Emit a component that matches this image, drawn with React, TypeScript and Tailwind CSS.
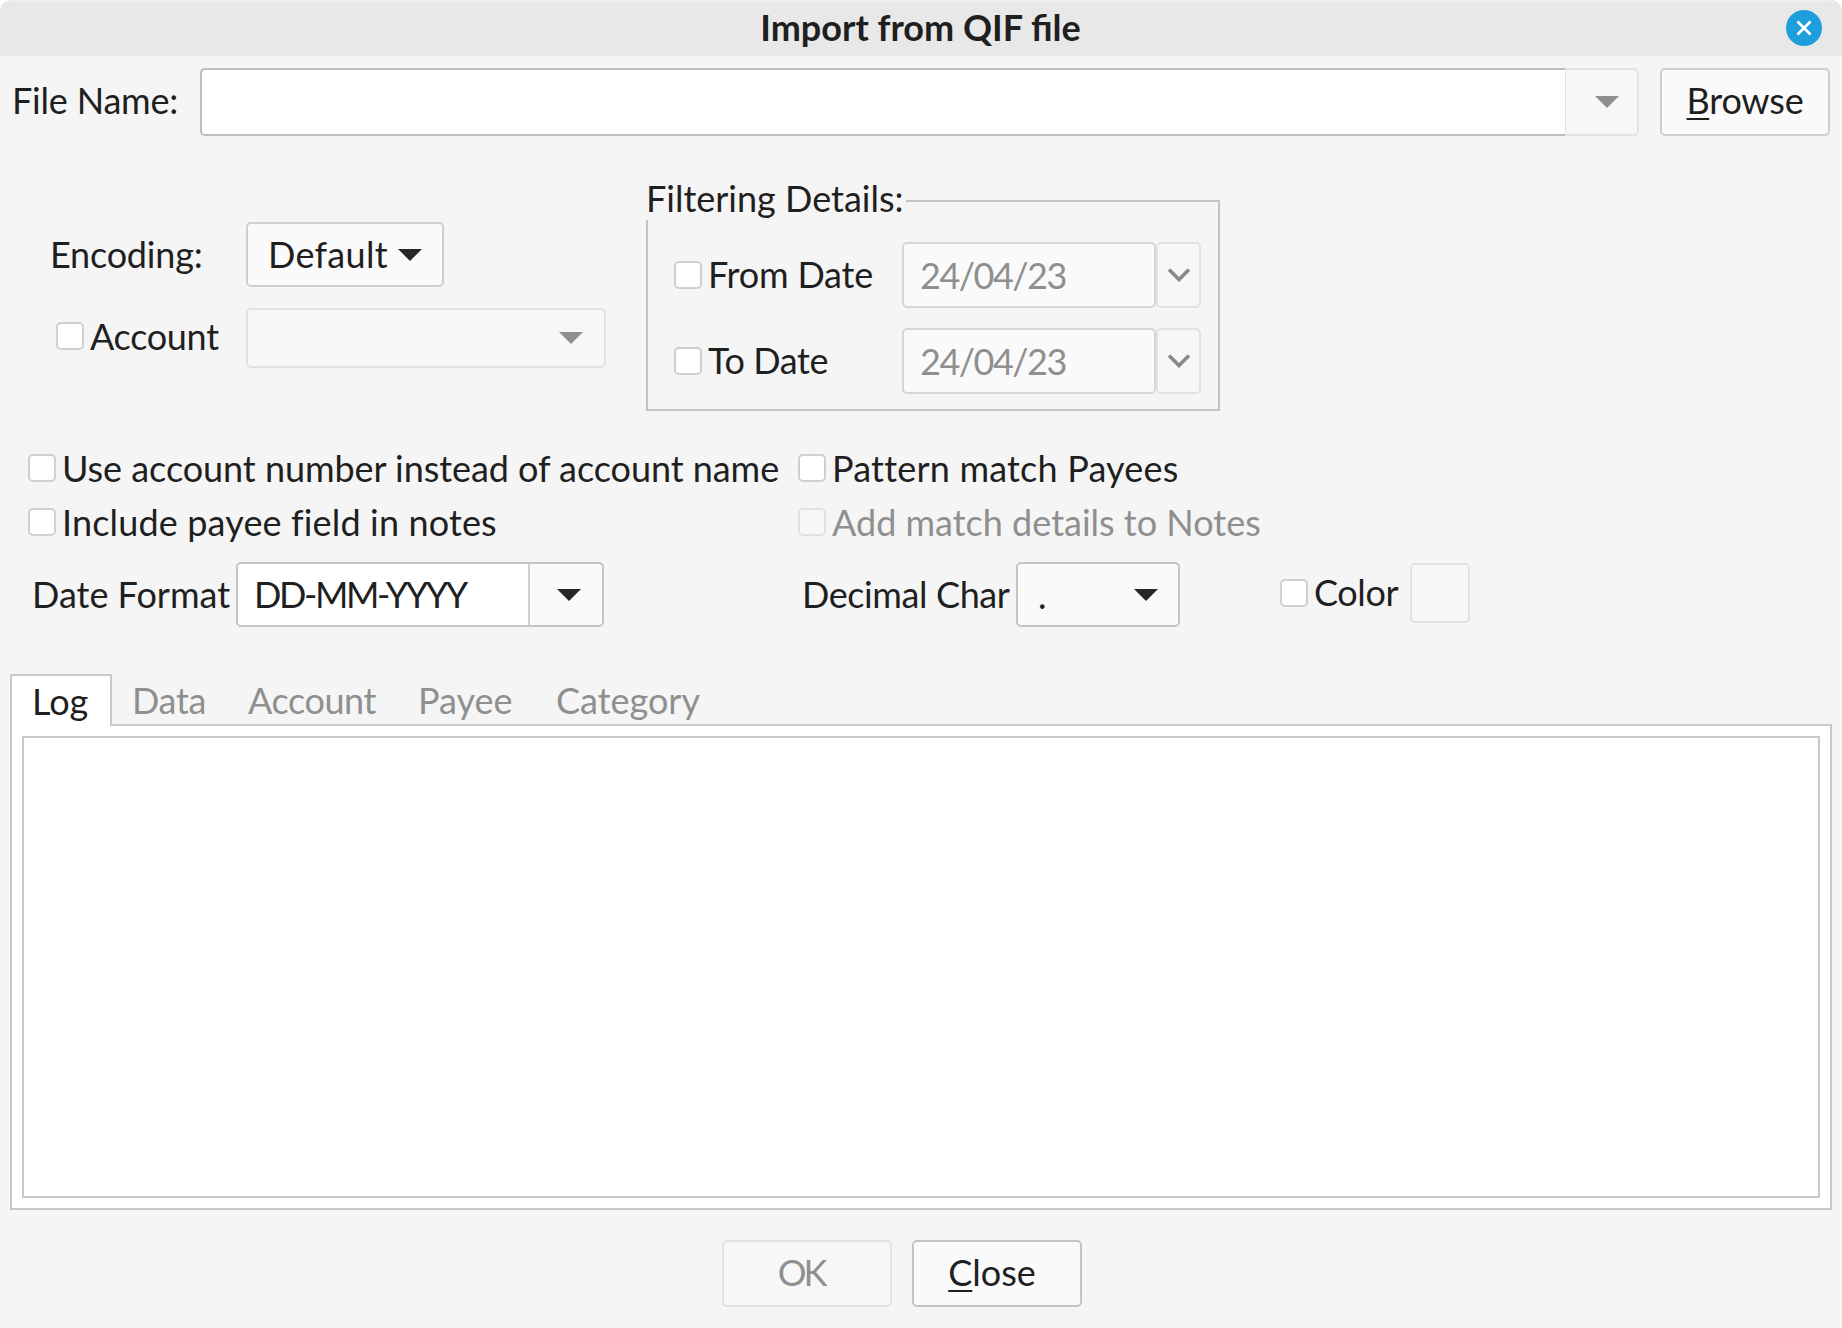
import type { ReactNode } from "react";

function Check({ disabled }: { disabled?: boolean }) {
  return (
    <span
      className={`block w-[28px] h-[28px] shrink-0 rounded-[5px] border-2 ${
        disabled ? "bg-[#f7f7f7] border-[#e2e2e2]" : "bg-white border-[#cfcfcf]"
      }`}
    />
  );
}

function Arrow({ dim }: { dim?: boolean }) {
  return (
    <svg width="24" height="12" viewBox="0 0 24 12" className="block">
      <polygon points="0,0 24,0 12,12" fill={dim ? "#8f8f8f" : "#262626"} />
    </svg>
  );
}

function Chevron() {
  return (
    <svg width="24" height="14" viewBox="0 0 24 14" className="block">
      <polyline points="2,1.5 12,11.5 22,1.5" fill="none" stroke="#8a8a8a" strokeWidth="3.6" />
    </svg>
  );
}

function DateRow({ label, last, tight }: { label: string; last?: boolean; tight?: boolean }) {
  return (
    <div className={`flex items-center ${last ? "mt-[20px]" : ""}`}>
      <div className="w-[254px] pl-[26px] flex items-center gap-[6px]">
        <Check />
        <span className={`whitespace-nowrap pb-[3px] ${tight ? "tracking-[-0.4px]" : "tracking-[-0.2px]"}`}>{label}</span>
      </div>
      <div className="w-[254px] h-[66px] rounded-[5px] border-2 border-[#d6d6d6] bg-[#fafafa] pl-[16px] flex items-center text-[#8f8f8f] tracking-[-1.5px]">
        24/04/23
      </div>
      <div className="w-[45px] h-[66px] rounded-[5px] border-2 border-[#e2e2e2] bg-[#f7f7f7] flex items-center justify-center">
        <Chevron />
      </div>
    </div>
  );
}

function CheckRow({ children, disabled, className }: { children: ReactNode; disabled?: boolean; className?: string }) {
  return (
    <div className={`flex items-center gap-[6px] h-[28px] whitespace-nowrap ${disabled ? "text-[#8f8f8f]" : ""}`}>
      <Check disabled={disabled} />
      <span className={className}>{children}</span>
    </div>
  );
}

export default function App() {
  return (
    <div className="relative w-[1842px] h-[1328px] bg-[#f5f5f5] text-[#1f1f1f] text-[36px] leading-none [font-family:Lato,sans-serif] flex flex-col overflow-hidden rounded-t-[12px]">
      <span className="absolute left-0 top-0 w-[13px] h-[13px] rounded-tl-[12px] border-t-2 border-l-2 border-[#b4b4b4]" />
      <span className="absolute right-0 top-0 w-[13px] h-[13px] rounded-tr-[12px] border-t-2 border-r-2 border-[#b4b4b4]" />

      <div className="relative h-[56px] shrink-0 bg-[#e8e8e8] border-t-2 border-[#eeeeee] flex items-center justify-center font-bold pb-[5px] pr-[1px]">
        Import from QIF file
        <button className="absolute right-[20px] top-[8px] w-[36px] h-[36px] rounded-full bg-[#1f9ede] flex items-center justify-center">
          <svg width="18" height="18" viewBox="0 0 18 18">
            <path d="M2.5 2.5 L15.5 15.5 M15.5 2.5 L2.5 15.5" stroke="white" strokeWidth="2.8" fill="none" />
          </svg>
        </button>
      </div>

      <div className="mt-[12px] pl-[12px] pr-[12px] flex items-center h-[68px]">
        <span className="w-[188px] pb-[4px] tracking-[-0.2px]">File Name:</span>
        <div className="w-[1365px] h-full bg-white border-2 border-r-0 border-[#bdbdbd] rounded-l-[5px]" />
        <div className="w-[74px] h-full bg-[#f7f7f7] border-2 border-l-[1px] border-[#e2e2e2] rounded-r-[5px] flex items-center justify-center pl-[10px]">
          <Arrow dim />
        </div>
        <div className="ml-[21px] w-[170px] h-full bg-[#fafafa] border-2 border-[#cfcfcf] rounded-[5px] flex items-center justify-center">
          <span className="pb-[4px] tracking-[-0.2px]"><span className="underline decoration-2 underline-offset-4">B</span>rowse</span>
        </div>
      </div>

      <div className="mt-[64px] flex h-[211px]">
        <div className="w-[646px] shrink-0 pt-[22px]">
          <div className="flex items-center">
            <span className="ml-[50px] w-[196px] pb-[2px] tracking-[-0.2px]">Encoding:</span>
            <div className="w-[198px] h-[65px] bg-[#fafafa] border-2 border-[#cfcfcf] rounded-[5px] flex items-center pl-[20px] gap-[10px]">
              <span className="pb-[2px] tracking-[0.3px]">Default</span>
              <Arrow />
            </div>
          </div>
          <div className="mt-[21px] flex items-center">
            <div className="ml-[56px] mb-[4px] w-[190px] flex items-center gap-[6px]">
              <Check />
              <span className="tracking-[-0.3px]">Account</span>
            </div>
            <div className="w-[360px] h-[60px] bg-[#f7f7f7] border-2 border-[#e2e2e2] rounded-[5px] flex items-center justify-end pr-[21px]">
              <Arrow dim />
            </div>
          </div>
        </div>
        <div className="relative w-[574px] h-[211px] border-2 border-[#c4c4c4] pt-[40px]">
          <span className="absolute left-[-2px] top-[-22px] bg-[#f5f5f5] pr-[2px] pb-[4px]">Filtering Details:</span>
          <DateRow label="From Date" />
          <DateRow label="To Date" last tight />
        </div>
      </div>

      <div className="mt-[43px] pl-[28px] grid grid-cols-[770px_auto] justify-start gap-y-[26px]">
        <CheckRow className="tracking-[-0.05px]">Use account number instead of account name</CheckRow>
        <CheckRow className="tracking-[0.2px]">Pattern match Payees</CheckRow>
        <CheckRow className="tracking-[0.15px]">Include payee field in notes</CheckRow>
        <CheckRow disabled>Add match details to Notes</CheckRow>
      </div>

      <div className="mt-[26px] h-[65px] flex items-center pl-[32px]">
        <span className="w-[204px] pb-[2px]">Date Format</span>
        <div className="w-[368px] h-full bg-[#fafafa] border-2 border-[#c4c4c4] rounded-[5px] flex overflow-hidden">
          <div className="w-[292px] bg-white border-r-2 border-[#cfcfcf] flex items-center pl-[16px] pb-[2px] tracking-[-2.4px]">DD-MM-YYYY</div>
          <div className="flex-1 flex items-center justify-center pl-[5px]">
            <Arrow />
          </div>
        </div>
        <span className="ml-[198px] w-[214px] pb-[2px] tracking-[-0.4px]">Decimal Char</span>
        <div className="w-[164px] h-full bg-[#fafafa] border-2 border-[#c4c4c4] rounded-[5px] flex items-center justify-between pl-[20px] pr-[20px]">
          <span>.</span>
          <Arrow />
        </div>
        <div className="ml-[100px] flex items-center gap-[6px] -mt-[4px]">
          <Check />
          <span className="w-[96px] pb-[2px] tracking-[-0.4px]">Color</span>
        </div>
        <div className="w-[60px] h-[60px] border-2 border-[#e2e2e2] rounded-[5px] bg-[#f7f7f7] -mt-[3px]" />
      </div>

      <div className="mt-[47px] pl-[10px] flex h-[50px]">
        <div className="w-[102px] h-[52px] z-10 bg-white border-2 border-b-0 border-[#c9c9c9] flex items-center pl-[20px]">Log</div>
        <div className="flex items-center text-[#8f8f8f] pt-[2px]">
          <span className="ml-[20px] w-[116px] tracking-[-0.3px]">Data</span>
          <span className="w-[170px] tracking-[-0.4px]">Account</span>
          <span className="w-[138px]">Payee</span>
          <span>Category</span>
        </div>
      </div>
      <div className="ml-[10px] mr-[10px] h-[486px] bg-white border-2 border-[#c9c9c9] p-[10px]">
        <div className="h-full border-2 border-[#c9c9c9] bg-white" />
      </div>

      <div className="mt-[30px] flex pl-[722px] gap-[20px]">
        <div className="w-[170px] h-[67px] bg-[#f7f7f7] border-2 border-[#e2e2e2] rounded-[5px] text-[#8f8f8f] flex items-center justify-center pr-[12px] pb-[4px] tracking-[-3px]">OK</div>
        <div className="w-[170px] h-[67px] bg-[#fafafa] border-2 border-[#c4c4c4] rounded-[5px] flex items-center justify-center pr-[10px]">
          <span className="pb-[4px]"><span className="underline decoration-2 underline-offset-4">C</span>lose</span>
        </div>
      </div>
    </div>
  );
}
